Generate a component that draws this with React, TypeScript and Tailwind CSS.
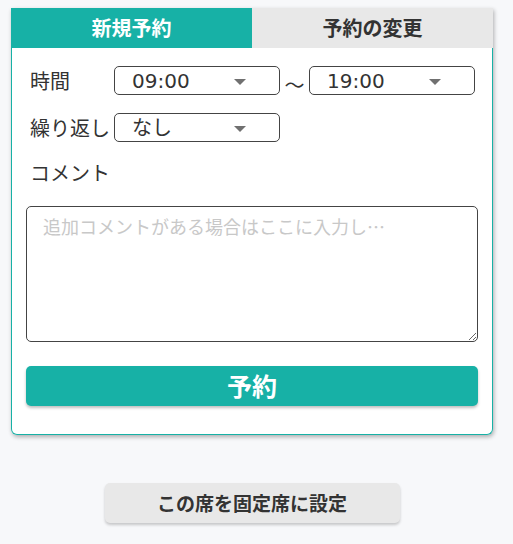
import type { ReactNode } from "react";

const font = { fontFamily: '"Noto Sans CJK JP", "Noto Sans", sans-serif' };
const valueFont = { fontFamily: '"DejaVu Sans", "Noto Sans CJK JP", sans-serif' };

function Select({ value, className = "" }: { value: string; className?: string }) {
  return (
    <div
      className={`relative flex h-[29px] w-[166px] items-center rounded-[5px] border border-[#444] bg-white pl-[17px] text-[20px] leading-none text-[#333] ${className}`}
    >
      <span style={valueFont}>{value}</span>
      <span className="absolute right-[33px] top-[12px] h-0 w-0 border-x-[6px] border-t-[6px] border-x-transparent border-t-[#707070]" />
    </div>
  );
}

function Row({ label, children }: { label: string; children: ReactNode }) {
  return (
    <div className="flex h-[29px] items-center">
      <span className="w-[88px] pl-1 text-[20px] leading-none text-[#333]">{label}</span>
      {children}
    </div>
  );
}

export default function App() {
  return (
    <div className="min-h-screen bg-[#f7f8fa] pt-2" style={font}>
      <div className="ml-[11px] w-[482px] rounded-b-[6px] bg-white shadow-[1px_2px_4px_rgba(0,0,0,0.3)]">
        <div className="flex h-10">
          <div className="flex w-[241px] items-center justify-center bg-[#17b1a6] text-[20px] font-bold text-white">
            新規予約
          </div>
          <div className="flex flex-1 items-center justify-center bg-[#e8e8e8] text-[20px] font-bold text-[#333]">
            予約の変更
          </div>
        </div>

        <div className="rounded-b-[6px] border border-t-0 border-[#17b1a6] px-[14px] pb-[28px] pt-[18px]">
          <Row label="時間">
            <Select value="09:00" />
            <span className="w-[29px] pt-[8px] text-center text-[20px] leading-none text-[#333]">〜</span>
            <Select value="19:00" />
          </Row>

          <div className="mt-[18px]">
            <Row label="繰り返し">
              <Select value="なし" />
            </Row>
          </div>

          <div className="mt-[17px] h-[27px] pl-1 text-[20px] leading-[27px] text-[#333]">コメント</div>

          <textarea
            className="mt-[20px] block h-[136px] w-full rounded-[5px] border border-[#444] px-4 py-[6px] text-[18px] leading-[27px] text-[#333] outline-none placeholder:text-[#c8c8c8]"
            placeholder="追加コメントがある場合はここに入力し…"
          />

          <button
            type="button"
            className="mt-[24px] flex h-10 w-full items-center justify-center rounded-[5px] bg-[#17b1a6] text-[25px] font-bold text-white shadow-[0_2px_3px_rgba(0,0,0,0.25)]"
          >
            予約
          </button>
        </div>
      </div>

      <div className="ml-[11px] flex w-[482px] justify-center pt-[48px]">
        <button
          type="button"
          className="flex h-10 w-[295px] items-center justify-center rounded-[5px] bg-[#e8e8e8] text-[19px] font-bold text-[#333] shadow-[0_2px_3px_rgba(0,0,0,0.2)]"
        >
          この席を固定席に設定
        </button>
      </div>
    </div>
  );
}
